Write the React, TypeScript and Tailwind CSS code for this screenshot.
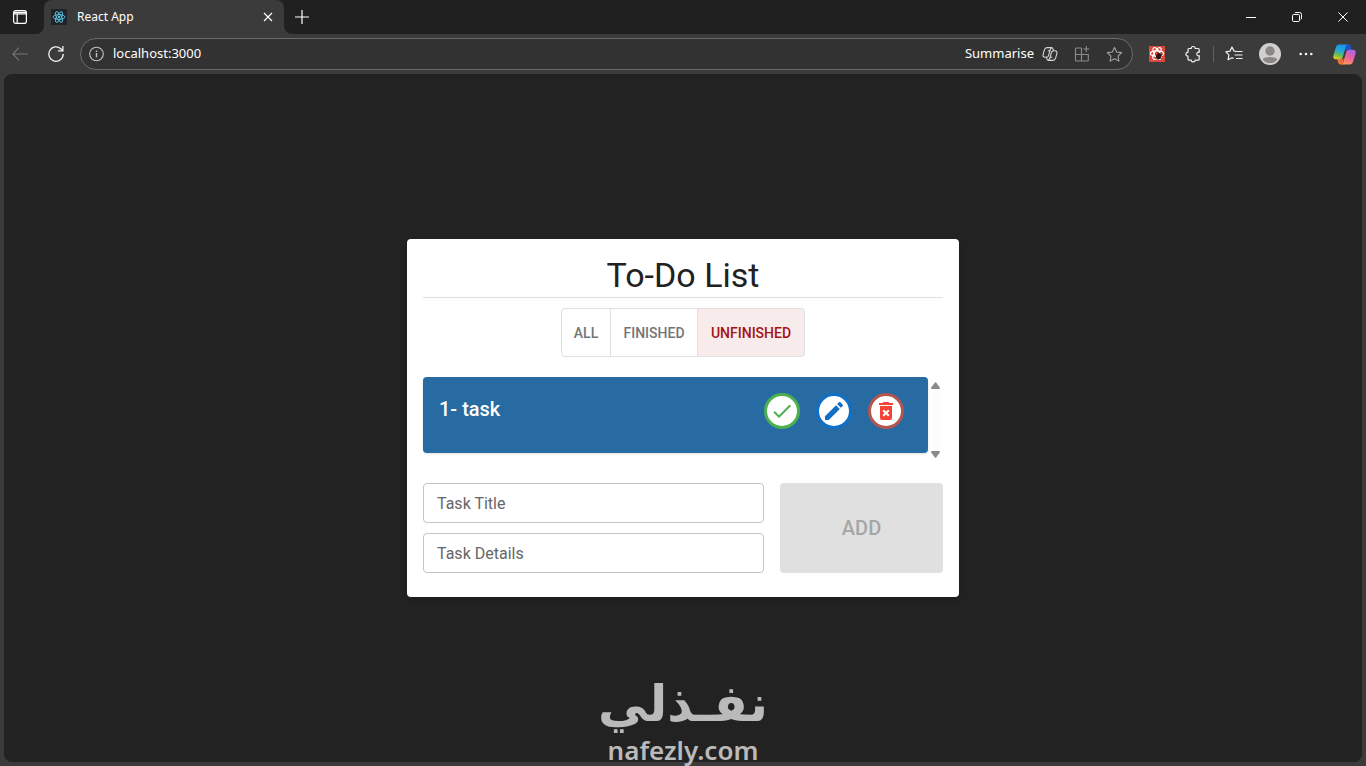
import { useState } from "react";
import type { ReactNode } from "react";
import { MdCheck, MdDeleteForever, MdModeEdit } from "react-icons/md";

type Filter = "all" | "finished" | "unfinished";

const filters: { id: Filter; label: string; width: string }[] = [
  { id: "all", label: "ALL", width: "w-[50px]" },
  { id: "finished", label: "FINISHED", width: "w-[88px]" },
  { id: "unfinished", label: "UNFINISHED", width: "w-[108px]" },
];

function ReactLogo({ className }: { className: string }) {
  return (
    <svg viewBox="0 0 16 16" className={className} fill="none" stroke="currentColor" strokeWidth="1">
      <ellipse cx="8" cy="8" rx="6.8" ry="2.7" />
      <ellipse cx="8" cy="8" rx="6.8" ry="2.7" transform="rotate(60 8 8)" />
      <ellipse cx="8" cy="8" rx="6.8" ry="2.7" transform="rotate(120 8 8)" />
      <circle cx="8" cy="8" r="1.3" fill="currentColor" stroke="none" />
    </svg>
  );
}

function ChromeButton({ label, className, children }: { label: string; className: string; children: ReactNode }) {
  return (
    <button type="button" aria-label={label} className={`flex h-8 shrink-0 items-center justify-center ${className}`}>
      {children}
    </button>
  );
}

function TabStrip() {
  return (
    <div className="flex h-[34px] bg-[#3b3b3b]">
      <div className="flex w-11 shrink-0 items-center rounded-br-lg bg-[#202020] pl-1">
        <ChromeButton label="Tab actions" className="w-8 text-white">
          <svg viewBox="0 0 16 16" className="size-4" fill="none" stroke="currentColor" strokeWidth="1.2">
            <rect x="1.6" y="1.6" width="12.8" height="12.8" rx="2.2" />
            <path d="M1.6 3.4h12.8M1.6 4.8h12.8M5.2 4.8v9.6" />
          </svg>
        </ChromeButton>
      </div>
      <div className="w-60 shrink-0 bg-[#202020]">
        <div className="flex h-full items-center rounded-t-lg bg-[#3b3b3b] pl-[7px]">
          <span className="flex size-4 items-center justify-center bg-[#20232a]">
            <ReactLogo className="size-[14px] text-[#5ccbe8]" />
          </span>
          <span className="ml-[10px] flex-1 text-xs text-white">React App</span>
          <ChromeButton label="Close tab" className="w-8 text-white">
            <svg viewBox="0 0 10 10" className="size-[10px]" stroke="currentColor" strokeWidth="1.2">
              <path d="M1 1l8 8M9 1l-8 8" />
            </svg>
          </ChromeButton>
        </div>
      </div>
      <div className="flex flex-1 items-center rounded-bl-lg bg-[#202020]">
        <ChromeButton label="New tab" className="w-9 text-white">
          <svg viewBox="0 0 14 14" className="size-[14px]" stroke="currentColor" strokeWidth="1.2">
            <path d="M7 0v14M0 7h14" />
          </svg>
        </ChromeButton>
        <div className="ml-auto flex text-white">
          <ChromeButton label="Minimise" className="w-[46px]">
            <svg viewBox="0 0 10 10" className="size-[10px]" stroke="currentColor">
              <path d="M0 5.5h10" />
            </svg>
          </ChromeButton>
          <ChromeButton label="Restore" className="w-[46px]">
            <svg viewBox="0 0 10 10" className="size-[10px]" fill="none" stroke="currentColor">
              <rect x="0.5" y="2.5" width="7" height="7" rx="1.2" />
              <path d="M2.5 1.2Q2.9.5 3.8.5H7.6Q9.5.5 9.5 2.4V6.2Q9.5 7.1 8.8 7.5" />
            </svg>
          </ChromeButton>
          <ChromeButton label="Close window" className="w-[46px]">
            <svg viewBox="0 0 10 10" className="size-[10px]" stroke="currentColor">
              <path d="M.4.4l9.2 9.2M9.6.4L.4 9.6" />
            </svg>
          </ChromeButton>
        </div>
      </div>
    </div>
  );
}

function CopilotLogo() {
  return (
    <svg viewBox="0 0 24 22" className="h-[21px] w-[23px]">
      <defs>
        <linearGradient id="copilotCool" x1="0.6" y1="0" x2="0.3" y2="1">
          <stop offset="0" stopColor="#1596ee" />
          <stop offset="0.45" stopColor="#27a9d6" />
          <stop offset="0.75" stopColor="#6fc04a" />
          <stop offset="1" stopColor="#e8c81f" />
        </linearGradient>
        <linearGradient id="copilotWarm" x1="0.7" y1="0" x2="0.3" y2="1">
          <stop offset="0" stopColor="#a668ee" />
          <stop offset="0.5" stopColor="#ef5f9f" />
          <stop offset="1" stopColor="#fb9a54" />
        </linearGradient>
      </defs>
      <path d="M14 0.5h2.2c1.5 0 2.2 1 2.6 2.4l.9 3.1h-4.2c-1.8 0-2.6.8-3.1 2.4z" fill="#1a56c8" />
      <path d="M10 21.5H7.8c-1.5 0-2.2-1-2.6-2.4L4.3 16h4.2c1.8 0 2.6-.8 3.1-2.4z" fill="#f2703d" />
      <path d="M6.6.5h9c-1.5.3-2.1 1.5-2.6 3.2L10.4 13c-.6 2-1.5 3-3.4 3H3.2C.6 16-.2 14.2.5 11.7L2.9 3.6C3.5 1.6 4.6.5 6.6.5z" fill="url(#copilotCool)" />
      <path d="M17.4 21.5h-9c1.5-.3 2.1-1.5 2.6-3.2L13.6 9c.6-2 1.5-3 3.4-3h3.8c2.6 0 3.4 1.8 2.7 4.3l-2.4 8.1c-.6 2-1.7 3.1-3.7 3.1z" fill="url(#copilotWarm)" />
    </svg>
  );
}

const starPath = "M8 1.3l2.05 4.3 4.7.65-3.4 3.3.8 4.7L8 12.05l-4.15 2.2.8-4.7-3.4-3.3 4.7-.65z";

function Toolbar() {
  return (
    <div className="flex h-10 items-center bg-[#3b3b3b] pr-1 text-[#f2f2f2]">
      <ChromeButton label="Back" className="w-10 text-[#747474]">
        <svg viewBox="0 0 16 14" className="h-[14px] w-4" fill="none" stroke="currentColor" strokeWidth="1.1">
          <path d="M7 .7L.8 7 7 13.3M.8 7H16" />
        </svg>
      </ChromeButton>
      <ChromeButton label="Refresh" className="w-8">
        <svg viewBox="0 0 18 18" className="size-[18px]" fill="none" stroke="currentColor" strokeWidth="1.3">
          <path d="M16.2 9A7.2 7.2 0 1 1 13.8 3.7L15.8 5.7" />
          <path d="M15.9 1v4.9H11" />
        </svg>
      </ChromeButton>
      <div className="ml-2 flex h-8 flex-1 items-center rounded-full border border-[#6b6b6b] bg-[#323232] pr-[2px]">
        <ChromeButton label="Site information" className="w-8 text-[#c4c4c4]">
          <svg viewBox="0 0 16 16" className="size-4" fill="none" stroke="currentColor" strokeWidth="1.1">
            <circle cx="7.5" cy="8" r="6.8" />
            <path d="M7.5 7v4.2M7.5 4.5v1.4" strokeWidth="1.4" />
          </svg>
        </ChromeButton>
        <input
          aria-label="Address"
          defaultValue="localhost:3000"
          className="min-w-0 flex-1 bg-transparent text-[13px] text-white outline-none"
        />
        <button type="button" className="flex h-8 items-center gap-2 px-2 text-[13px] text-white">
          Summarise
          <svg viewBox="0 0 16 16" className="size-4 text-[#d6d6d6]" fill="none" stroke="currentColor" strokeWidth="1.1">
            <path d="M5 1.6h4.4c1 0 1.4.6 1.7 1.5l.5 1.7h1.3c1.7 0 2.5 1.2 2 2.9l-1.3 4.5c-.4 1.4-1.2 2.2-2.6 2.2H6.6c-1 0-1.4-.6-1.7-1.5l-.5-1.7H3.1c-1.7 0-2.5-1.2-2-2.9l1.3-4.5C2.8 2.4 3.6 1.6 5 1.6z" />
            <path d="M9.8 1.7c-.8.2-1.2.8-1.5 1.8L6.6 9.3c-.4 1.3-1 1.9-2.2 1.9M6.2 14.3c.8-.2 1.2-.8 1.5-1.8l1.7-5.8c.4-1.3 1-1.9 2.2-1.9M5.8 4.8h2.1M8.1 11.2h2.2" />
          </svg>
        </button>
        <ChromeButton label="Install app" className="w-8 text-[#8c8c8c]">
          <svg viewBox="0 0 16 16" className="size-4" fill="none" stroke="currentColor" strokeWidth="1.1">
            <path d="M7.5 2H2.3a.8.8 0 0 0-.8.8v11.4c0 .4.3.8.8.8h11.2c.4 0 .8-.3.8-.8V8.500H1.5M7.5 2v13M12.3 0v6M9.3 3h6" />
          </svg>
        </ChromeButton>
        <ChromeButton label="Add to favourites" className="w-8 text-[#a6a6a6]">
          <svg viewBox="0 0 16 16" className="size-[17px]" fill="none" stroke="currentColor" strokeLinejoin="round">
            <path d={starPath} />
          </svg>
        </ChromeButton>
      </div>
      <ChromeButton label="React developer tools" className="ml-2 w-8">
        <svg viewBox="0 0 16 16" className="size-4" fill="none">
          <path d="M0 0h16v16H0z" fill="#d9483b" />
          <g stroke="#ffffff" strokeWidth="1.2">
            <ellipse cx="8" cy="7.5" rx="6.6" ry="2.7" />
            <ellipse cx="8" cy="7.5" rx="6.6" ry="2.7" transform="rotate(60 8 7.5)" />
            <ellipse cx="8" cy="7.5" rx="6.6" ry="2.7" transform="rotate(120 8 7.5)" />
          </g>
          <ellipse cx="9.8" cy="10.2" rx="2.6" ry="3.2" fill="#321310" transform="rotate(30 9.8 10.2)" />
          <path d="M6 8.5l7 4.5M6 12.5l7.500-4M8.500 6l1.500 2 2.500-1.500" stroke="#321310" strokeWidth="0.8" />
        </svg>
      </ChromeButton>
      <ChromeButton label="Extensions" className="ml-1 w-8">
        <svg viewBox="0 0 18 18" className="size-[18px]" fill="none" stroke="currentColor" strokeWidth="1.2" strokeLinejoin="round">
          <path d="M5 3.5H7.2C7.2.8 11.2.8 11.2 3.5H14.200a1 1 0 0 1 1 1V7.300C12 6.500 12 11.500 15.200 10.700V14.200a1 1 0 0 1-1 1H11.200C11.200 17.400 7.200 17.400 7.200 15.200H5a1 1 0 0 1-1-1V11.200C1.200 11.200 1.200 7.200 4 7.200V4.500a1 1 0 0 1 1-1z" />
        </svg>
      </ChromeButton>
      <span className="ml-1 h-4 w-px bg-[#606060]" />
      <ChromeButton label="Favourites" className="ml-1 w-8">
        <svg viewBox="0 0 18 16" className="h-4 w-[18px]" fill="none" stroke="currentColor" strokeWidth="1.2" strokeLinejoin="round">
          <path d="M10.3 5.2L8.9 5 7 1 5 5.200.8 5.900l3.100 3-.8 4.800L7 11.700l1.600.9" />
          <path d="M10 5.500h7.500M9.600 9h7.900M11 12.500h6.500" />
        </svg>
      </ChromeButton>
      <ChromeButton label="Profile" className="ml-1 w-8">
        <svg viewBox="0 0 22 22" className="size-[22px]">
          <circle cx="11" cy="11" r="11" fill="#d2d0ce" />
          <circle cx="11" cy="8" r="4.700" fill="#8a8886" />
          <path d="M3.700 16.400C5.500 13.300 16.500 13.300 18.300 16.400 15 21.300 7 21.300 3.700 16.400z" fill="#8a8886" />
        </svg>
      </ChromeButton>
      <ChromeButton label="Settings and more" className="ml-1 w-8">
        <svg viewBox="0 0 14 4" className="h-1 w-[14px]" fill="currentColor">
          <circle cx="1.700" cy="2" r="1.300" />
          <circle cx="7" cy="2" r="1.300" />
          <circle cx="12.300" cy="2" r="1.300" />
        </svg>
      </ChromeButton>
      <ChromeButton label="Copilot" className="ml-1 w-9">
        <CopilotLogo />
      </ChromeButton>
    </div>
  );
}

function TaskButton({ label, className, children }: { label: string; className: string; children: ReactNode }) {
  return (
    <button
      type="button"
      aria-label={label}
      className={`flex size-9 items-center justify-center rounded-full border-[3px] bg-white ${className}`}
    >
      {children}
    </button>
  );
}

function TaskList() {
  return (
    <div className="mt-5 flex h-[86px]">
      <ul className="flex-1">
        <li className="flex h-[76px] items-start justify-between rounded-[4px] bg-[#286aa2] p-4 shadow-sm">
          <h2 className="text-xl leading-8 font-medium text-white">1- task</h2>
          <div className="flex gap-4 pr-2">
            <TaskButton label="Finish task" className="border-[#4caf50] text-[#4caf50]">
              <MdCheck className="size-6" />
            </TaskButton>
            <TaskButton label="Edit task" className="border-[#1070c8] text-[#1070c8]">
              <MdModeEdit className="size-6" />
            </TaskButton>
            <TaskButton label="Delete task" className="border-[#b4564f] text-[#f44336]">
              <MdDeleteForever className="size-6" />
            </TaskButton>
          </div>
        </li>
      </ul>
      <div className="flex w-[15px] flex-col items-center justify-between py-[5px] text-[#8b8b8b]" aria-hidden="true">
        <svg viewBox="0 0 9 7" className="h-[7px] w-[9px]" fill="currentColor">
          <path d="M3.700.8q.8-1 1.600 0L8.800 5.500Q9.200 7 8 7H1Q-.2 7 .2 5.500z" />
        </svg>
        <span className="my-1 w-2 flex-1 bg-[#fcfcfc]" />
        <svg viewBox="0 0 9 7" className="h-[7px] w-[9px]" fill="currentColor">
          <path d="M3.700 6.200q.8 1 1.600 0L8.800 1.500Q9.200 0 8 0H1Q-.2 0 .2 1.500z" />
        </svg>
      </div>
    </div>
  );
}

function TodoCard() {
  const [filter, setFilter] = useState<Filter>("unfinished");
  const [title, setTitle] = useState("");
  const [details, setDetails] = useState("");
  const field =
    "h-10 w-full rounded-[4px] border border-[#c4c4c4] bg-white px-[13px] text-base text-[#212121] outline-none placeholder:text-[#666666]";

  return (
    <section className="w-full max-w-[552px] rounded-[4px] bg-white px-4 pt-4 pb-6 font-['Roboto',sans-serif] shadow-md">
      <h1 className="border-b border-[#e0e0e0] pb-[2px] text-center text-[34px] leading-10 text-[#212121]">
        To-Do List
      </h1>
      <div role="group" aria-label="Filter tasks" className="mt-[10px] flex justify-center">
        {filters.map(({ id, label, width }) => (
          <button
            key={id}
            type="button"
            aria-pressed={filter === id}
            onClick={() => setFilter(id)}
            className={`-ml-px h-[49px] border border-[#e0e0e0] text-sm font-medium first:ml-0 first:rounded-l-[4px] last:rounded-r-[4px] ${width} ${
              filter === id ? "border-[#decaca] bg-[#f8ebeb] text-[#a51216]" : "text-[#757575]"
            }`}
          >
            {label}
          </button>
        ))}
      </div>
      <TaskList />
      <form className="mt-5 flex gap-4" onSubmit={(event) => event.preventDefault()}>
        <div className="flex min-w-0 flex-1 flex-col gap-[10px]">
          <input
            aria-label="Task Title"
            placeholder="Task Title"
            value={title}
            onChange={(event) => setTitle(event.target.value)}
            className={field}
          />
          <input
            aria-label="Task Details"
            placeholder="Task Details"
            value={details}
            onChange={(event) => setDetails(event.target.value)}
            className={field}
          />
        </div>
        <button
          type="submit"
          disabled={!title}
          className="w-[163px] rounded-[4px] bg-[#1976d2] text-xl font-medium text-white disabled:bg-[#e0e0e0] disabled:text-[#a6a6a6]"
        >
          ADD
        </button>
      </form>
    </section>
  );
}

export default function App() {
  return (
    <div className="relative flex min-h-screen flex-col bg-[#3b3b3b] font-['Noto_Sans',sans-serif]">
      <TabStrip />
      <Toolbar />
      <main className="mx-1 mb-1 flex flex-1 items-center justify-center rounded-lg bg-[#222222]">
        <TodoCard />
      </main>
      <div className="pointer-events-none absolute inset-x-0 bottom-0 flex flex-col items-center text-[#bababa]">
        <span lang="ar" dir="rtl" className="font-['DejaVu_Sans',sans-serif] text-[50px] leading-[60px] font-bold">
          نفـذلي
        </span>
        <span className="text-[26px] leading-8 font-semibold">nafezly.com</span>
      </div>
    </div>
  );
}
